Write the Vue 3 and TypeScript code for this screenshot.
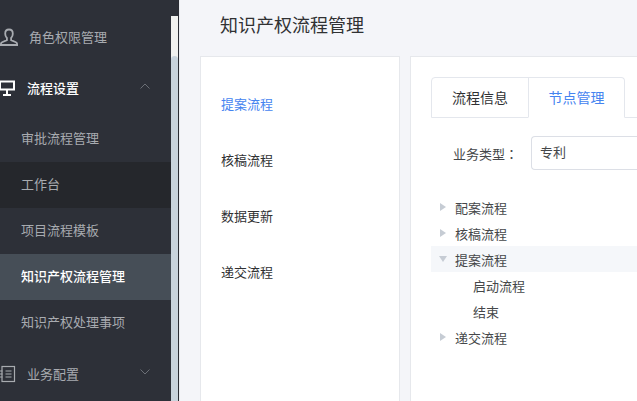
<script setup lang="ts">
import { ref } from 'vue'

const subMenus = ['审批流程管理', '工作台', '项目流程模板', '知识产权流程管理', '知识产权处理事项']
const activeSub = ref('知识产权流程管理')
const hoverSub = ref('工作台')
const flows = ['提案流程', '核稿流程', '数据更新', '递交流程']
const activeFlow = ref('提案流程')
const tree = [
  { label: '配案流程', open: false, children: [] as string[] },
  { label: '核稿流程', open: false, children: [] as string[] },
  { label: '提案流程', open: true, children: ['启动流程', '结束'] },
  { label: '递交流程', open: false, children: [] as string[] }
]
</script>

<template>
  <div class="page">
    <aside class="side">
      <nav class="menu">
        <div class="top-item first">
          <svg class="ico" width="24" height="24" viewBox="0 0 24 24" fill="none" stroke="#a8abb0" stroke-width="1.8">
            <path d="M9 5.500c-2.400 0-3.800 1.700-3.800 4.200 0 2 .7 3.300 1.700 4.300v2.200l-4.800 2c-.8.400-1.200.9-1.200 1.700v1.100h16.200v-1.100c0-.8-.4-1.300-1.200-1.700l-4.800-2V14c1-1 1.700-2.300 1.700-4.300C12.800 7.200 11.400 5.500 9 5.500z" />
          </svg>
          <span>角色权限管理</span>
        </div>
        <div class="top-item open">
          <svg class="ico" width="24" height="24" viewBox="0 0 24 24" fill="none" stroke="#fff" stroke-width="2">
            <rect x="0" y="6.500" width="14" height="8" />
            <path d="M7 14.500V20M3 20h8" />
          </svg>
          <span>流程设置</span>
          <svg class="arrow" width="10" height="6" viewBox="0 0 10 6" fill="none" stroke="#6b6f76"><path d="M.5 5.500 5 1l4.500 4.500" /></svg>
        </div>
        <div class="sub-list">
          <div
            v-for="s in subMenus"
            :key="s"
            class="sub-item"
            :class="{ active: s === activeSub, hover: s === hoverSub }"
          >{{ s }}</div>
        </div>
        <div class="top-item last">
          <svg class="ico" width="24" height="24" viewBox="0 0 24 24" fill="none" stroke="#a8abb0" stroke-width="1.2">
            <rect x="2" y="5.500" width="12.500" height="15" />
            <path d="M5.500 10h6M5.500 13h6M5.500 16h6M0 10h2.500M0 13h2.500M0 16h2.500" />
          </svg>
          <span>业务配置</span>
          <svg class="arrow" width="10" height="6" viewBox="0 0 10 6" fill="none" stroke="#6b6f76"><path d="M.5.500 5 5 9.500.500" /></svg>
        </div>
      </nav>
      <div class="scrollbar"><div class="thumb"></div></div>
    </aside>
    <main class="main">
      <h1 class="title">知识产权流程管理</h1>
      <div class="cards">
        <section class="card flow-card">
          <div
            v-for="f in flows"
            :key="f"
            class="flow-item"
            :class="{ active: f === activeFlow }"
          >{{ f }}</div>
        </section>
        <section class="card detail-card">
          <div class="tabs">
            <div class="tab">流程信息</div>
            <div class="tab current">节点管理</div>
            <div class="tab-rest"></div>
          </div>
          <div class="form-row">
            <label class="form-label">业务类型<span class="colon">：</span></label>
            <div class="select">专利</div>
          </div>
          <div class="tree">
            <template v-for="n in tree" :key="n.label">
              <div class="node" :class="{ current: n.open }">
                <span class="caret" :class="{ down: n.open }"></span>
                <span>{{ n.label }}</span>
              </div>
              <div v-for="c in n.children" :key="c" class="node child">{{ c }}</div>
            </template>
          </div>
        </section>
      </div>
    </main>
  </div>
</template>

<style>
html, body {
  margin: 0;
  overflow: hidden;
}
</style>

<style scoped>
.page {
  display: flex;
  width: 637px;
  height: 401px;
  overflow: hidden;
  background: #f4f5f9;
  font-family: "Liberation Sans", "Noto Sans CJK SC", sans-serif;
  font-size: 13px;
  color: #333;
}
.side {
  display: flex;
  flex: none;
  width: 179px;
  height: 401px;
  background: #2d3038;
  border-right: 1px solid #2a2c33;
  box-sizing: border-box;
}
.menu {
  width: 171px;
  flex: none;
  color: #a8abb0;
}
.top-item {
  display: flex;
  align-items: center;
  height: 50px;
  position: relative;
}
.top-item.first {
  height: 50px;
  margin-top: 11px;
}
.top-item.first span {
  margin-left: 5px;
}
.top-item.open {
  height: 52px;
  color: #fff;
  font-weight: 500;
}
.top-item.last {
  height: 58px;
  margin-top: -2px;
}
.top-item span {
  margin-left: 3px;
}
.ico {
  flex: none;
}
.arrow {
  position: absolute;
  right: 21px;
  top: 50%;
  margin-top: -4px;
}
.sub-list {
  margin-top: 3px;
}
.sub-item {
  height: 46px;
  line-height: 46px;
  padding-left: 21px;
}
.sub-item.hover {
  background: #25272c;
}
.sub-item.active {
  background: #464e57;
  color: #fff;
  font-weight: 500;
}
.scrollbar {
  flex: none;
  width: 7px;
  height: 385px;
  margin-top: 16px;
  background: #f1f1ef;
}
.thumb {
  height: 345px;
  margin-top: 40px;
  background: #c8d3dc;
  border-radius: 4px 4px 0 0;
}
.main {
  flex: 1;
  min-width: 0;
  padding: 0 0 0 20px;
  border-left: 1px solid #eceef2;
}
.title {
  margin: 0;
  height: 56px;
  padding-left: 20px;
  font-size: 18px;
  font-weight: 400;
  line-height: 53px;
  color: #303133;
}
.cards {
  display: flex;
  gap: 10px;
  height: 400px;
}
.card {
  flex: none;
  box-sizing: border-box;
  background: #fff;
  border: 1px solid #e6e8ec;
}
.flow-card {
  width: 200px;
  padding: 20px 0 0 20px;
}
.flow-item {
  height: 56px;
  line-height: 56px;
  color: #303133;
}
.flow-item.active {
  color: #4584f0;
}
.detail-card {
  width: 300px;
  padding: 20px 0 0 20px;
}
.tabs {
  display: flex;
  height: 41px;
  line-height: 40px;
  font-size: 14px;
}
.tab {
  box-sizing: border-box;
  width: 98px;
  text-align: center;
  border: 1px solid #e4e7ed;
  border-radius: 4px 0 0 0;
  color: #303133;
}
.tab.current {
  width: 97px;
  margin-left: -1px;
  color: #4584f0;
  border-bottom-color: #fff;
  border-radius: 0 4px 0 0;
}
.tab-rest {
  flex: 1;
  border-bottom: 1px solid #e4e7ed;
}
.form-row {
  display: flex;
  align-items: center;
  margin-top: 18px;
}
.form-label {
  box-sizing: border-box;
  width: 100px;
  text-align: right;
  padding-right: 13px;
  color: #454749;
}
.colon {
  font-family: "Noto Sans CJK TC", sans-serif;
}
.select {
  box-sizing: border-box;
  flex: 1;
  height: 34px;
  line-height: 32px;
  padding-left: 8px;
  border: 1px solid #dcdfe6;
  border-right: none;
  border-radius: 4px 0 0 4px;
  color: #454749;
}
.tree {
  margin-top: 24px;
  color: #454749;
}
.node {
  display: flex;
  align-items: center;
  height: 26px;
  padding-left: 9px;
}
.node.current {
  background: #f5f7fa;
}
.node.child {
  padding-left: 42px;
}
.caret {
  flex: none;
  width: 0;
  height: 0;
  margin-right: 9px;
  border-style: solid;
  border-width: 4px 0 4px 6px;
  border-color: transparent transparent transparent #c6ccd4;
}
.caret.down {
  margin-left: -1px;
  margin-right: 8px;
  border-width: 6px 4px 0 4px;
  border-color: #c6ccd4 transparent transparent transparent;
}
</style>
